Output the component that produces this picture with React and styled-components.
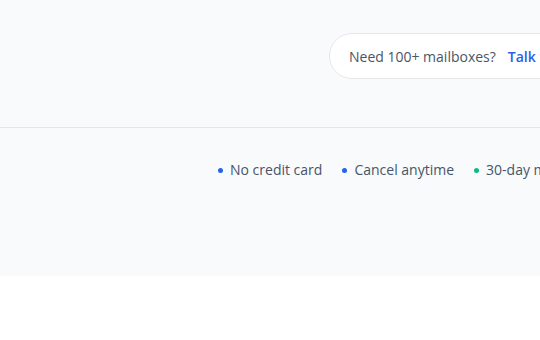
import React from "react";
import styled, { createGlobalStyle } from "styled-components";

const Global = createGlobalStyle`
  html, body { margin: 0; padding: 0; background: #ffffff; }
  body { font-family: "Open Sans", "Noto Sans", sans-serif; overflow: hidden; }
`;

const Hero = styled.div`
  background: #f9fafb;
  width: 540px;
  overflow: hidden;
`;

const TopBar = styled.header`
  display: flex;
  align-items: flex-start;
  padding: 33px 0 0 329px;
  box-sizing: border-box;
  height: 128px;
  border-bottom: 1px solid #e2e5ea;
  white-space: nowrap;
`;

const Pill = styled.div`
  display: flex;
  align-items: center;
  gap: 12px;
  height: 46px;
  box-sizing: border-box;
  padding: 0 20px 0 19px;
  background: #ffffff;
  border: 1px solid #e5e7eb;
  border-radius: 999px;
  font-size: 14px;
  color: #4b5563;
  flex-shrink: 0;
`;

const TalkLink = styled.a`
  color: #2563eb;
  font-weight: 600;
  text-decoration: none;
`;

const Perks = styled.ul`
  list-style: none;
  margin: 0;
  padding: 32px 0 0 218px;
  height: 148px;
  box-sizing: border-box;
  display: flex;
  align-items: flex-start;
  gap: 20px;
  white-space: nowrap;
`;

const Perk = styled.li`
  display: flex;
  align-items: center;
  gap: 7px;
  font-size: 14px;
  line-height: 20px;
  color: #475569;
  flex-shrink: 0;
`;

const Dot = styled.span`
  width: 5px;
  height: 5px;
  border-radius: 50%;
  background: ${(p) => p.$color};
`;

const perks = [
  { text: "No credit card", color: "#2563eb" },
  { text: "Cancel anytime", color: "#2563eb" },
  { text: "30-day money-back guarantee", color: "#10b981" },
];

export default function App() {
  return (
    <>
      <Global />
      <Hero>
        <TopBar>
          <Pill>
            <span>Need 100+ mailboxes?</span>
            <TalkLink href="#">Talk to sales →</TalkLink>
          </Pill>
        </TopBar>
        <Perks>
          {perks.map((p) => (
            <Perk key={p.text}>
              <Dot $color={p.color} />
              {p.text}
            </Perk>
          ))}
        </Perks>
      </Hero>
    </>
  );
}
